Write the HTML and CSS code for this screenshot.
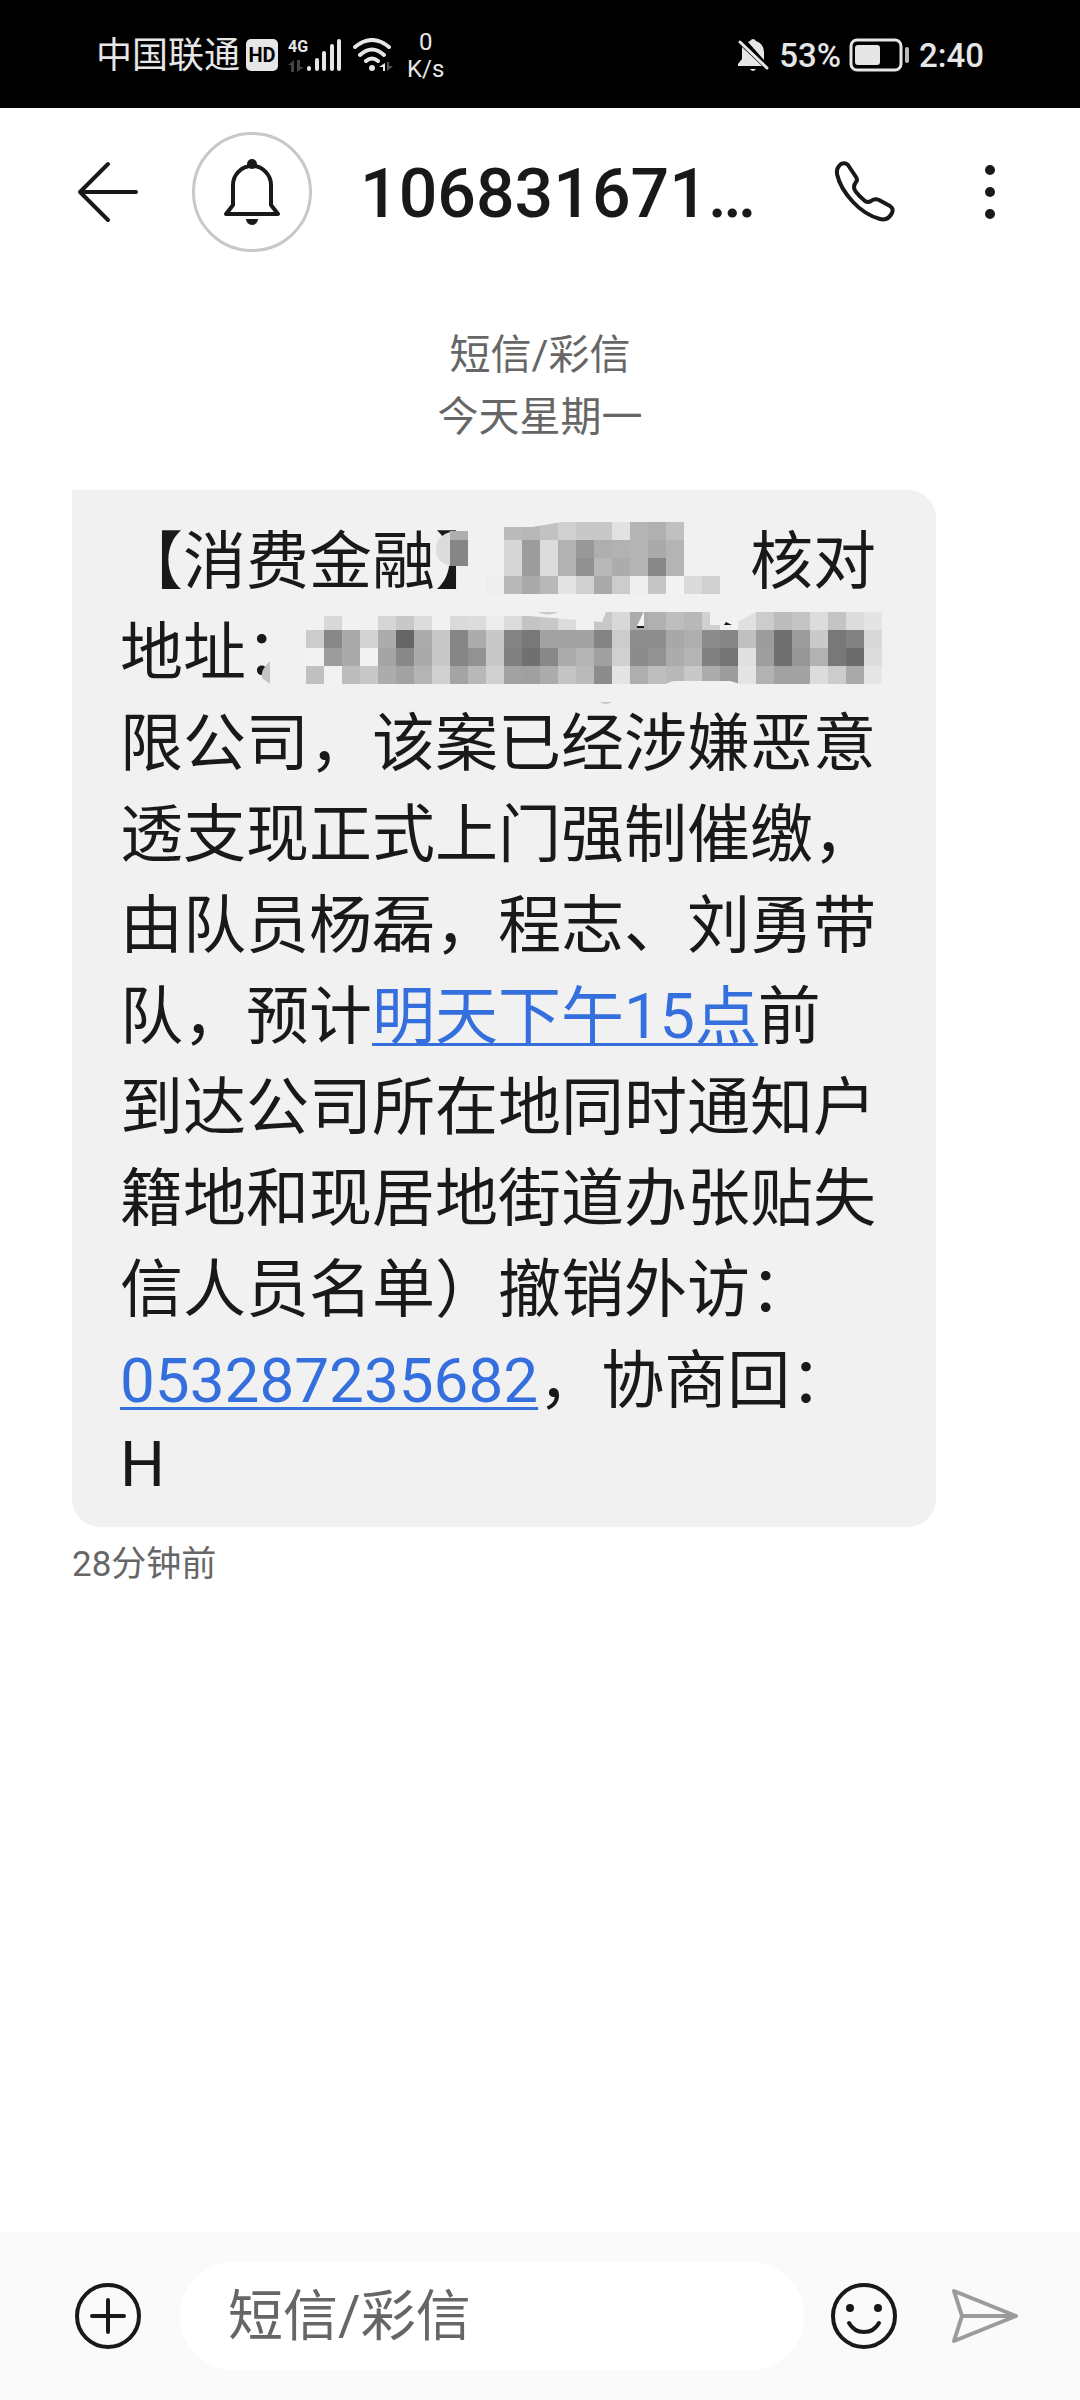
FILE: index.html
```html
<!DOCTYPE html>
<html lang="zh-CN">
<head>
    <meta charset="UTF-8">
    <meta name="viewport" content="width=device-width, initial-scale=1.0">
    <title>短信/彩信</title>
    <link rel="stylesheet" href="styles.css">
</head>
<body>
    <div class="status-bar">
        <div class="status-left">
            <span class="carrier">中国联通</span>
            <span class="hd-badge">HD</span>
            <div class="signal">
                <div class="network">
                    <span class="network-type">4G</span>
                    <svg width="16" height="12" viewBox="0 0 16 12" fill="#444"><path d="M0 5L6 0V12H3V5zM9 0h3v7h4l-7 5z"/></svg>
                </div>
                <svg width="36" height="34" viewBox="0 0 36 34" stroke="#e6e6e6" stroke-width="4" stroke-linecap="round">
                    <path d="M3 31v-1M11 31V22M18 31V15M26 31V8M33 31V3"/>
                </svg>
            </div>
            <svg class="wifi" width="40" height="34" viewBox="0 0 40 34" fill="none" stroke="#e6e6e6" stroke-width="4" stroke-linecap="round">
                <path d="M2 9Q19 -5 36 9M7 17Q19 6 31 17M13 23Q19 18 25 23"/>
                <circle cx="19" cy="30" r="3" fill="#e6e6e6" stroke="none"/>
                <path d="M26 29l6-4v8h-2v-4z" fill="#e6e6e6" stroke="none"/>
                <path d="M34 24h2v4h4l-6 5z" fill="#555" stroke="none"/>
            </svg>
            <div class="speed"><span>0</span><span>K/s</span></div>
        </div>
        <div class="status-right">
            <svg width="32" height="34" viewBox="0 0 32 34" fill="#e6e6e6">
                <path d="M5 9L25 28H1v-2l4-5zM11 4l2-1q3-4 6 0 8 3 8 11v8z"/>
                <path d="M13 31h6q-3 4-6 0z"/>
                <path d="M3 4l27 26" stroke="#e6e6e6" stroke-width="3" stroke-linecap="round"/>
            </svg>
            <span class="percent">53%</span>
            <svg class="battery" width="60" height="34" viewBox="0 0 60 34">
                <rect x="2" y="2" width="50" height="30" rx="6" fill="none" stroke="#e6e6e6" stroke-width="3"/>
                <rect x="6" y="7" width="25" height="20" rx="3" fill="#e6e6e6"/>
                <rect x="56" y="9" width="4" height="16" rx="2" fill="#bbb"/>
            </svg>
            <span>2:40</span>
        </div>
    </div>

    <header class="header">
        <button type="button" class="icon-button" aria-label="返回">
            <svg width="72" height="72" viewBox="0 0 72 72" fill="none" stroke="#191919" stroke-width="4" stroke-linecap="round" stroke-linejoin="round">
                <path d="M36 8L8 36l28 28M8 36h56"/>
            </svg>
        </button>
        <div class="avatar">
            <svg width="114" height="114" viewBox="3 3 114 114" fill="none" stroke="#191919" stroke-width="4" stroke-linejoin="round">
                <path d="M41 73V53a19 19 0 0 1 38 0V73l7 9H34z"/>
                <circle cx="60" cy="32" r="5" fill="#191919" stroke="none"/>
                <path d="M54 87h12a6 6 0 0 1-12 0z" fill="#191919" stroke="none"/>
            </svg>
        </div>
        <h1 class="title">106831671…</h1>
        <button type="button" class="icon-button" aria-label="拨打电话">
            <svg width="72" height="72" viewBox="0 0 72 72" fill="none" stroke="#191919" stroke-width="4" stroke-linejoin="round">
                <path d="M13 8Q17 6 20 9L28 21Q30 24 28 26Q24 31 28 36Q32 41 37 45Q40 47 43 45Q47 42 51 44L62 50Q66 53 64 57Q60 65 52 63Q37 59 25 46Q12 32 9 18Q8 12 13 8z"/>
            </svg>
        </button>
        <button type="button" class="icon-button more" aria-label="更多">
            <svg width="72" height="72" viewBox="0 0 72 72" fill="#191919">
                <circle cx="36" cy="14" r="5"/>
                <circle cx="36" cy="36" r="5"/>
                <circle cx="36" cy="58" r="5"/>
            </svg>
        </button>
    </header>

    <main class="thread">
        <div class="thread-info">
            <p>短信/彩信</p>
            <p>今天星期一</p>
        </div>
        <div class="bubble">
            <p class="message">【消费金融】<span class="hidden-name"></span>核对<br>
                地址：<br>
                限公司，该案已经涉嫌恶意<br>
                透支现正式上门强制催缴，<br>
                由队员杨磊，程志、刘勇带<br>
                队，预计<a href="#">明天下午15点</a>前<br>
                到达公司所在地同时通知户<br>
                籍地和现居地街道办张贴失<br>
                信人员名单）撤销外访：<br>
                <a href="tel:053287235682" class="phone">053287235682</a>，协商回：
                <span class="last-line">H</span>
            </p>
            <svg class="mosaic" id="mosaic" width="863" height="210" viewBox="0 0 863 210" aria-hidden="true"></svg>
        </div>
        <p class="time">28分钟前</p>
    </main>

    <form class="compose">
        <button type="button" class="icon-button" aria-label="添加">
            <svg width="72" height="72" viewBox="0 0 72 72" fill="none" stroke="#191919" stroke-width="4" stroke-linecap="round">
                <circle cx="36" cy="36" r="31"/>
                <path d="M20 36h32M36 20v32"/>
            </svg>
        </button>
        <input type="text" class="compose-input" placeholder="短信/彩信" aria-label="短信/彩信">
        <button type="button" class="icon-button" aria-label="表情">
            <svg width="72" height="72" viewBox="0 0 72 72" fill="none" stroke="#191919" stroke-width="4" stroke-linecap="round">
                <circle cx="36" cy="36" r="31"/>
                <path d="M21 43Q26 52 36 52Q46 52 51 43"/>
                <circle cx="22" cy="28" r="4" fill="#191919" stroke="none"/>
                <circle cx="50" cy="28" r="4" fill="#191919" stroke="none"/>
            </svg>
        </button>
        <button type="submit" class="icon-button send" aria-label="发送">
            <svg width="72" height="72" viewBox="0 0 72 72" fill="none" stroke="#9b9b9b" stroke-width="4" stroke-linejoin="round">
                <path d="M6 11L68 36L6 61L14 36zM14 36h54"/>
            </svg>
        </button>
    </form>

    <script>
        // 每行马赛克：x、y、高度，以及每格的灰度
        const rows = [
            [378, 41, 9, 'ae'],
            [378, 50, 26, '86'],
            [432, 32, 18, 'bb b8 c2 d0 c8 c8 e2 b5 b0 c0'],
            [432, 50, 18, 'd6 9c dc b2 98 ae b2 b4 aa b4'],
            [432, 68, 18, 'd6 9c dc b2 90 b8 ac b4 88 b4'],
            [414, 86, 18, 'ee b8 aa b8 e4 d0 aa cc ee c6 f3 da d0'],
            [234, 126, 14, 'f1 d8 f1 f1 d6 c8 dc f1 da dc ec dc c4 c8 dc'],
            [522, 122, 18, 'c8 d8 ac b0 be b8 d0 f1 e0 cc bc c4 dc c4 dc e4'],
            [234, 140, 18, 'cc 88 aa d2 ac 66 ac c8 86 ac c8 84 78 a2 a2 a2 84 cc 8e 8e a8 ae 8c 86 c0 9c 70 9c ca 78 82 d8'],
            [234, 158, 18, 'f2 9c aa f2 a4 88 aa c8 86 92 c8 80 70 88 ac b4 a0 d0 8c 92 ac b4 80 74 e0 9e 70 96 b2 78 6c dc'],
            [234, 176, 18, 'c0 f2 bc c8 ac a2 b4 d0 a4 b8 d0 a2 a0 ac c4 ba 8c e4 ae be b8 c8 ac 9c e4 b2 a2 a2 dc cc aa e6']
        ];
        const mosaic = document.getElementById('mosaic');

        function addShape(name, attrs) {
            const el = document.createElementNS('http://www.w3.org/2000/svg', name);
            for (const key in attrs) {
                el.setAttribute(key, attrs[key]);
            }
            mosaic.appendChild(el);
        }

        // 涂抹的边缘
        addShape('path', { d: 'M378 42Q364 46 364 60Q364 72 378 76z', fill: '#dcdcdc' });
        addShape('path', { d: 'M396 38h12v70h-6V76h-6z', fill: '#f1f1f1' });
        addShape('path', { d: 'M198 171Q188 180 190 188L198 194z', fill: '#c4c4c4' });
        addShape('path', { d: 'M198 145h18v54h-18z', fill: '#f1f1f1' });

        rows.forEach(([x, y, height, cells]) => {
            cells.split(' ').forEach((grey, i) => {
                addShape('rect', { x: x + i * 18, y: y, width: 18, height: height, fill: '#' + grey.repeat(3) });
            });
        });

        addShape('path', { d: 'M432 32h58l-30 5h-28zM456 126L530 132L534 122H456zM638 122h46l-24 13h-22zM594 194q4-3 10-3h54l10 3z', fill: '#f1f1f1' });
        addShape('path', { d: 'M466 122h20q-10 5-20 0zM528 212h12q-6 4-12 0z', fill: '#c8c8c8' });
        addShape('path', { d: 'M565 136l7-15v15z', fill: '#f4f4f4' });
        addShape('path', { d: 'M565 136h7v2h-7zM652 135l2-3 6 3z', fill: '#191919' });
    </script>
</body>
</html>
```
FILE: styles.css
```css
* {
    box-sizing: border-box;
}

body {
    font-family: Roboto, "Noto Sans CJK SC", sans-serif;
    background-color: #fff;
    color: #191919;
    display: flex;
    flex-direction: column;
    min-height: 100vh;
    margin: 0;
}

p,
h1 {
    margin: 0;
}

svg {
    display: block;
    flex-shrink: 0;
}

/* Status bar */
.status-bar {
    display: flex;
    justify-content: space-between;
    align-items: center;
    height: 108px;
    padding: 2px 96px 0;
    background-color: #000;
    color: #e6e6e6;
}

.status-left,
.status-right {
    display: flex;
    align-items: center;
    white-space: nowrap;
}

.carrier {
    padding-top: 2px;
    font-size: 36px;
    line-height: 36px;
}

.hd-badge {
    width: 32px;
    margin: 0 10px 0 6px;
    border-radius: 5px;
    background-color: #e6e6e6;
    color: #000;
    font-size: 20px;
    font-weight: 700;
    line-height: 32px;
    text-align: center;
}

.signal {
    display: flex;
    align-items: flex-end;
}

.network {
    display: flex;
    flex-direction: column;
    gap: 4px;
}

.network-type {
    width: 18px;
    font-size: 16px;
    font-weight: 700;
    line-height: 18px;
}

.wifi {
    margin: 0 14px 0 11px;
}

.speed {
    display: flex;
    flex-direction: column;
    padding-top: 2px;
    font-size: 24px;
    line-height: 27px;
    text-align: center;
}

.status-right {
    font-size: 33px;
    font-weight: 500;
}

.percent {
    margin-left: 10px;
}

.battery {
    margin: 0 10px 0 8px;
}

/* Header */
.header {
    display: flex;
    align-items: center;
    height: 168px;
    padding: 0 54px 0 72px;
}

.icon-button {
    flex-shrink: 0;
    padding: 0;
    border: none;
    background: none;
    cursor: pointer;
}

.avatar {
    flex-shrink: 0;
    width: 120px;
    height: 120px;
    margin: 0 48px;
    border: 3px solid #c8c8c8;
    border-radius: 50%;
}

.title {
    flex: 1;
    overflow: hidden;
    padding-top: 4px;
    font-size: 68px;
    font-weight: 500;
    line-height: 84px;
    white-space: nowrap;
}

.more {
    margin-left: 54px;
}

/* Messages */
.thread {
    flex: 1;
    padding: 48px 72px;
}

.thread-info {
    margin-bottom: 42px;
    color: #666;
    font-size: 41px;
    line-height: 62px;
    text-align: center;
}

.bubble {
    position: relative;
    width: fit-content;
    padding: 26px 60px 24px 48px;
    border-radius: 0 28px 28px 28px;
    background-color: #f1f1f1;
}

.message {
    font-size: 63px;
    line-height: 91px;
    white-space: nowrap;
    text-spacing-trim: space-all;
}

.message a {
    color: #346fdd;
    text-decoration: underline;
    text-decoration-thickness: 3px;
    text-underline-offset: 5px;
}

.message .phone {
    font-size: 62px;
}

.hidden-name {
    display: inline-block;
    width: 252px;
}

.last-line {
    display: block;
    line-height: 77px;
}

.mosaic {
    position: absolute;
    top: 0;
    left: 0;
    overflow: visible;
}

.time {
    margin-top: 14px;
    color: #666;
    font-size: 35px;
    line-height: 48px;
}

/* Compose bar */
.compose {
    display: flex;
    align-items: center;
    height: 168px;
    padding: 0 60px 0 72px;
    background-color: #fafafa;
}

.compose-input {
    flex: 1;
    min-width: 0;
    height: 108px;
    margin: 0 24px 0 36px;
    padding: 0 48px;
    border: none;
    border-radius: 54px;
    outline: none;
    background-color: #fff;
    color: #191919;
    font-family: inherit;
    font-size: 55px;
}

.compose-input::placeholder {
    color: #666;
}

.send {
    margin-left: 48px;
}
```
